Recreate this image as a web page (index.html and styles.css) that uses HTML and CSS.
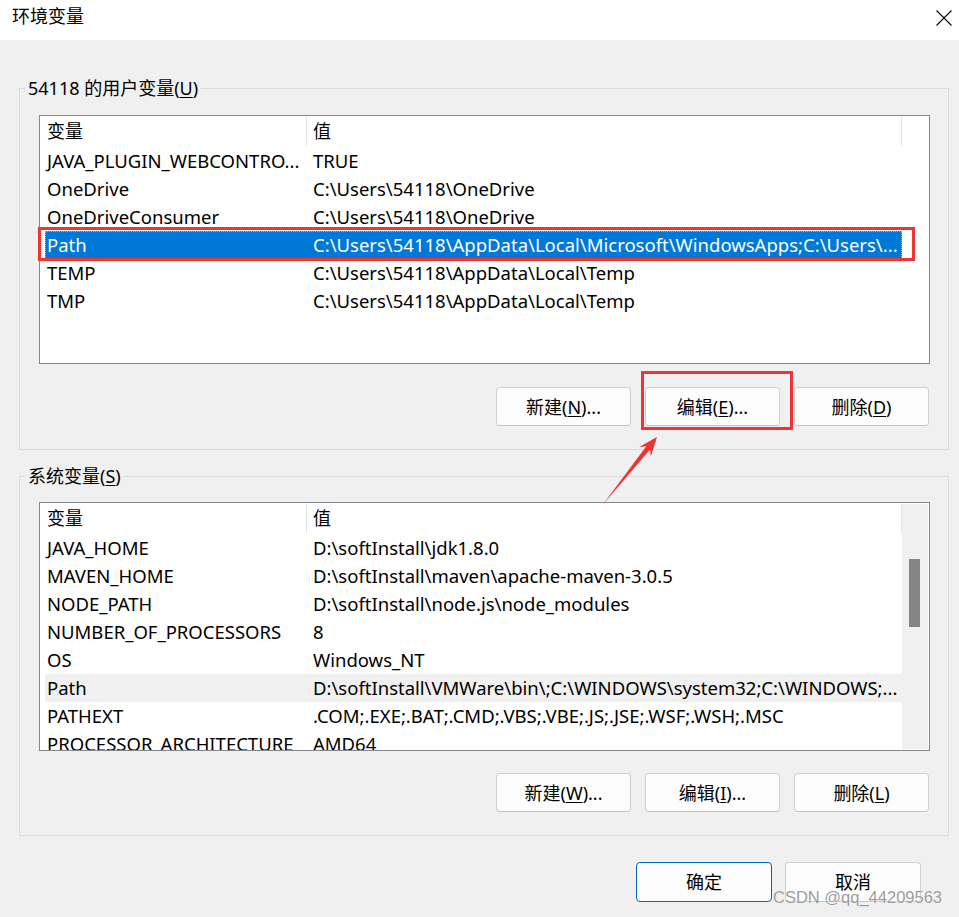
FILE: index.html
```html
<!DOCTYPE html>
<html lang="zh-CN">
<head>
<meta charset="utf-8">
<title>环境变量</title>
<link rel="stylesheet" href="styles.css">
</head>
<body>
<div class="titlebar">
  <span class="title">环境变量</span>
  <svg class="close" width="16" height="16" viewBox="0 0 16 16"><path d="M0.5 0.5 L15.5 15.5 M15.5 0.5 L0.5 15.5" stroke="#000" stroke-width="1.1" fill="none"/></svg>
</div>
<div class="main">
  <fieldset class="group group-user">
    <legend>54118 的用户变量(<u>U</u>)</legend>
    <div class="list">
      <div class="rows">
        <div class="row head"><div class="c1">变量</div><div class="c2">值</div></div>
        <div class="row"><div class="c1">JAVA_PLUGIN_WEBCONTRO...</div><div class="c2">TRUE</div></div>
        <div class="row"><div class="c1">OneDrive</div><div class="c2">C:\Users\54118\OneDrive</div></div>
        <div class="row"><div class="c1">OneDriveConsumer</div><div class="c2">C:\Users\54118\OneDrive</div></div>
        <div class="row sel"><div class="c1">Path</div><div class="c2">C:\Users\54118\AppData\Local\Microsoft\WindowsApps;C:\Users\...</div></div>
        <div class="row"><div class="c1">TEMP</div><div class="c2">C:\Users\54118\AppData\Local\Temp</div></div>
        <div class="row"><div class="c1">TMP</div><div class="c2">C:\Users\54118\AppData\Local\Temp</div></div>
      </div>
    </div>
    <div class="buttons">
      <button class="btn">新建(<u>N</u>)...</button>
      <button class="btn">编辑(<u>E</u>)...</button>
      <button class="btn">删除(<u>D</u>)</button>
    </div>
  </fieldset>

  <fieldset class="group group-sys">
    <legend>系统变量(<u>S</u>)</legend>
    <div class="list">
      <div class="rows">
        <div class="row head"><div class="c1">变量</div><div class="c2">值</div></div>
        <div class="row"><div class="c1">JAVA_HOME</div><div class="c2">D:\softInstall\jdk1.8.0</div></div>
        <div class="row"><div class="c1">MAVEN_HOME</div><div class="c2">D:\softInstall\maven\apache-maven-3.0.5</div></div>
        <div class="row"><div class="c1">NODE_PATH</div><div class="c2">D:\softInstall\node.js\node_modules</div></div>
        <div class="row"><div class="c1">NUMBER_OF_PROCESSORS</div><div class="c2">8</div></div>
        <div class="row"><div class="c1">OS</div><div class="c2">Windows_NT</div></div>
        <div class="row hl"><div class="c1">Path</div><div class="c2">D:\softInstall\VMWare\bin\;C:\WINDOWS\system32;C:\WINDOWS;...</div></div>
        <div class="row"><div class="c1">PATHEXT</div><div class="c2">.COM;.EXE;.BAT;.CMD;.VBS;.VBE;.JS;.JSE;.WSF;.WSH;.MSC</div></div>
        <div class="row"><div class="c1">PROCESSOR_ARCHITECTURE</div><div class="c2">AMD64</div></div>
      </div>
      <div class="scroll"><div class="thumb"></div></div>
    </div>
    <div class="buttons">
      <button class="btn">新建(<u>W</u>)...</button>
      <button class="btn">编辑(<u>I</u>)...</button>
      <button class="btn">删除(<u>L</u>)</button>
    </div>
  </fieldset>

  <div class="footer">
    <button class="btn big default">确定</button>
    <button class="btn big">取消</button>
  </div>
</div>

<div class="mark mark-row"></div>
<div class="mark mark-btn"></div>
<svg class="arrow" width="80" height="90" viewBox="595 430 80 90">
  <polygon points="657,437 639.2,447 646.3,446.3 602.5,505 650.1,449.5 650.8,456.4" fill="#ee3434"/>
</svg>
<div class="watermark">CSDN @qq_44209563</div>
</body>
</html>
```

FILE: styles.css
```css
* { box-sizing: border-box; }

body {
  margin: 0;
  width: 959px;
  height: 917px;
  overflow: hidden;
  position: relative;
  background: #f0f0f0;
  color: #000;
  font-family: "Noto Sans", "Noto Sans CJK SC", sans-serif;
  font-size: 18px;
  line-height: 24px;
}

u { text-underline-offset: 2px; text-decoration-thickness: 1px; }

.titlebar {
  height: 40px;
  background: #fff;
  display: flex;
  align-items: flex-start;
  justify-content: space-between;
  padding: 4px 7px 0 12px;
}
.close { margin-top: 6px; }

.main {
  padding: 36px 0 0 19px;
}

.group {
  margin: 0;
  width: 930px;
  min-width: 0;
  border: 1px solid #dcdcdc;
  padding: 15px 18px 23px 5px;
}
.group legend {
  padding: 0 3px;
  line-height: 24px;
}
.group-sys { margin-top: 14px; padding-top: 14px; }

.list {
  margin-left: 14px;
  width: 891px;
  height: 249px;
  border: 1px solid #828790;
  background: #fff;
  display: flex;
  overflow: hidden;
}
.rows {
  flex: 1;
  overflow: hidden;
  padding-left: 5px;
}
.row {
  width: 857px;
  height: 28px;
  display: flex;
  align-items: center;
  white-space: nowrap;
  font-size: 18.5px;
}
.row .c1 { width: 262px; padding-left: 2px; overflow: hidden; }
.row .c2 { flex: 1; padding-left: 6px; overflow: hidden; }
.row.head { height: 31px; font-size: 18px; }
.row.head .c1,
.row.head .c2 { height: 29px; line-height: 29px; border-right: 1px solid #e5e5e5; }
.row.sel {
  background: #0078d7;
  color: #fff;
  outline: 1px dotted #e9a15e;
  outline-offset: -1px;
}
.row.hl { background: #f0f0f0; }

.scroll {
  width: 26px;
  margin: 1px 1px 1px 0;
  background: #f0f0f0;
  padding: 55px 0 0 7px;
}
.thumb { width: 11px; height: 68px; background: #858585; }

.buttons {
  display: flex;
  justify-content: flex-end;
  gap: 14px;
  margin: 23px 1px 0 0;
}
.group-sys .buttons { margin-top: 22px; }

.btn {
  width: 135px;
  height: 39px;
  margin: 0;
  padding: 0;
  border: 1px solid #d0d0d0;
  border-bottom-color: #c4c4c4;
  border-radius: 4px;
  background: #fdfdfd;
  font: inherit;
  color: #000;
}
.btn.big { width: 136px; height: 40px; }
.btn.default { border: 1px solid #0067c0; }

.footer {
  display: flex;
  justify-content: flex-end;
  gap: 13px;
  margin-top: 26px;
  padding-right: 38px;
}

.mark {
  position: absolute;
  border: 3px solid #ee3434;
}
.mark-row { left: 38px; top: 227px; width: 877px; height: 34px; }
.mark-btn { left: 641px; top: 371px; width: 152px; height: 59px; }

.arrow { position: absolute; left: 595px; top: 430px; }

.watermark {
  position: absolute;
  left: 773px;
  top: 888px;
  font-family: "Liberation Sans", Arial, sans-serif;
  font-size: 16.5px;
  line-height: 19px;
  color: rgba(120, 120, 120, 0.75);
  text-shadow: 0 0 1px #fff, 0 0 1px #fff;
}
```
